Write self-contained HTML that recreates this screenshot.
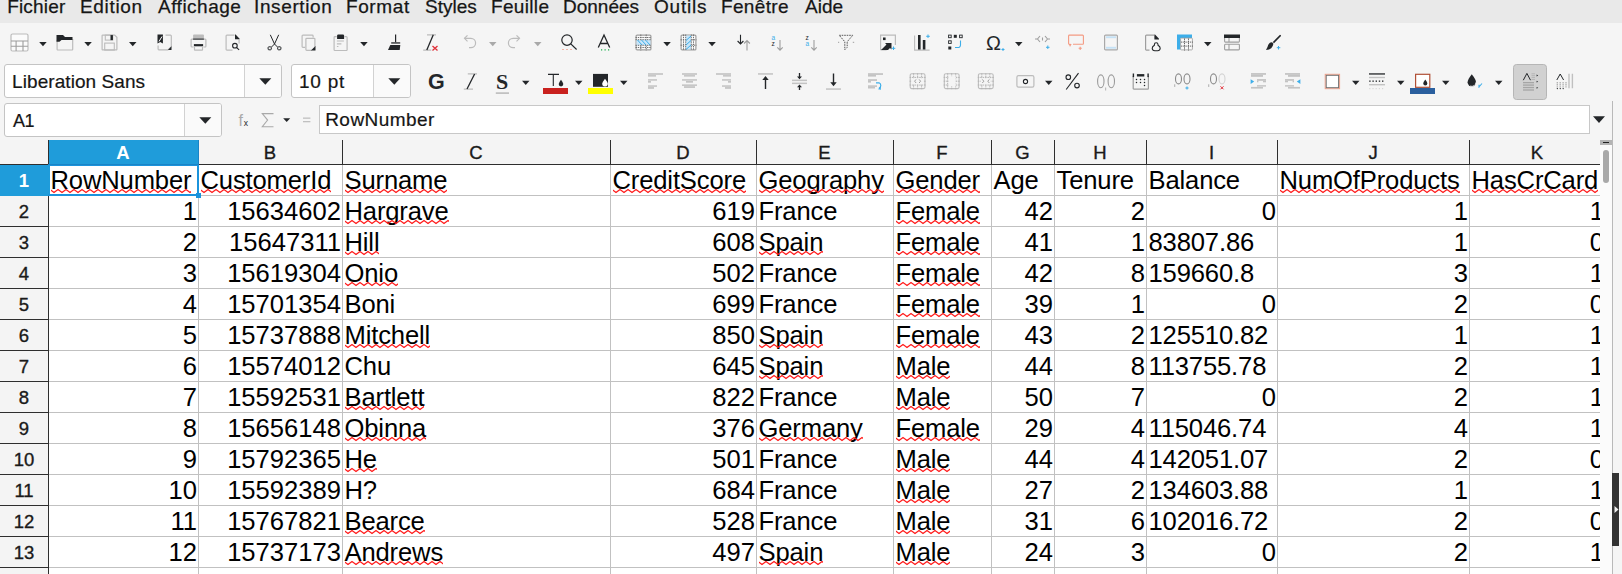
<!DOCTYPE html>
<html><head><meta charset="utf-8"><style>
html,body{margin:0;padding:0;width:1622px;height:574px;overflow:hidden;font-family:"Liberation Sans", sans-serif;}
body{position:relative;background:#f5f5f5}
.w{position:relative;display:inline-block;line-height:30px}
.sq{position:absolute;left:0;top:22.5px;display:block}
</style></head><body>
<svg width="0" height="0" style="position:absolute"><defs><pattern id="zz" x="0" y="0" width="8" height="6" patternUnits="userSpaceOnUse"><path d="M-5 4.5L-1 1.5 3 4.5 7 1.5 11 4.5" fill="none" stroke="#ff1a1a" stroke-width="1.3"/></pattern></defs></svg>
<div style="position:absolute;left:0px;top:0px;width:1622px;height:23px;background:#e9e9e9"></div><div style="position:absolute;left:7.199999999999999px;top:-3px;font-size:19px;line-height:20px;letter-spacing:0.17px;white-space:nowrap;color:#161616;-webkit-text-stroke:.25px #161616">Fichier</div><div style="position:absolute;left:80px;top:-3px;font-size:19px;line-height:20px;letter-spacing:0.67px;white-space:nowrap;color:#161616;-webkit-text-stroke:.25px #161616">Edition</div><div style="position:absolute;left:158px;top:-3px;font-size:19px;line-height:20px;letter-spacing:0.5px;white-space:nowrap;color:#161616;-webkit-text-stroke:.25px #161616">Affichage</div><div style="position:absolute;left:254px;top:-3px;font-size:19px;line-height:20px;letter-spacing:0.62px;white-space:nowrap;color:#161616;-webkit-text-stroke:.25px #161616">Insertion</div><div style="position:absolute;left:346px;top:-3px;font-size:19px;line-height:20px;letter-spacing:0.6px;white-space:nowrap;color:#161616;-webkit-text-stroke:.25px #161616">Format</div><div style="position:absolute;left:425px;top:-3px;font-size:19px;line-height:20px;letter-spacing:0px;white-space:nowrap;color:#161616;-webkit-text-stroke:.25px #161616">Styles</div><div style="position:absolute;left:491px;top:-3px;font-size:19px;line-height:20px;letter-spacing:0.33px;white-space:nowrap;color:#161616;-webkit-text-stroke:.25px #161616">Feuille</div><div style="position:absolute;left:563px;top:-3px;font-size:19px;line-height:20px;letter-spacing:0px;white-space:nowrap;color:#161616;-webkit-text-stroke:.25px #161616">Données</div><div style="position:absolute;left:654px;top:-3px;font-size:19px;line-height:20px;letter-spacing:0.8px;white-space:nowrap;color:#161616;-webkit-text-stroke:.25px #161616">Outils</div><div style="position:absolute;left:721px;top:-3px;font-size:19px;line-height:20px;letter-spacing:0.33px;white-space:nowrap;color:#161616;-webkit-text-stroke:.25px #161616">Fenêtre</div><div style="position:absolute;left:805px;top:-3px;font-size:19px;line-height:20px;letter-spacing:0px;white-space:nowrap;color:#161616;-webkit-text-stroke:.25px #161616">Aide</div><div style="position:absolute;left:4px;top:64px;width:278px;height:34px;box-sizing:border-box;border:1px solid #c4c4c4;border-radius:3px;background:#fff"></div><div style="position:absolute;left:245px;top:65px;width:36px;height:32px;background:#fafafa;border-radius:0 2px 2px 0"></div><div style="position:absolute;left:244px;top:65px;width:1px;height:32px;background:#d2d2d2"></div><div style="position:absolute;left:12.1px;top:72px;font-size:19px;line-height:20px;letter-spacing:0.07px;white-space:nowrap;color:#161616;-webkit-text-stroke:.2px #161616">Liberation Sans</div><div style="position:absolute;left:291px;top:64px;width:120px;height:34px;box-sizing:border-box;border:1px solid #c4c4c4;border-radius:3px;background:#fff"></div><div style="position:absolute;left:374px;top:65px;width:36px;height:32px;background:#fafafa;border-radius:0 2px 2px 0"></div><div style="position:absolute;left:373px;top:65px;width:1px;height:32px;background:#d2d2d2"></div><div style="position:absolute;left:299px;top:72px;font-size:19px;line-height:20px;letter-spacing:0.75px;white-space:nowrap;color:#161616;-webkit-text-stroke:.2px #161616">10 pt</div><div style="position:absolute;left:4px;top:103px;width:218px;height:34px;box-sizing:border-box;border:1px solid #c4c4c4;border-radius:3px;background:#fff"></div><div style="position:absolute;left:185px;top:104px;width:36px;height:32px;background:#fafafa;border-radius:0 2px 2px 0"></div><div style="position:absolute;left:184px;top:104px;width:1px;height:32px;background:#d2d2d2"></div><div style="position:absolute;left:12.9px;top:111px;font-size:18px;line-height:20px;letter-spacing:-0.5px;white-space:nowrap;color:#161616;-webkit-text-stroke:.2px #161616">A1</div><div style="position:absolute;left:319px;top:105px;width:1271px;height:29px;box-sizing:border-box;border:1px solid #c8c8c8;background:#fff"></div><div style="position:absolute;left:325.2px;top:110px;font-size:19px;line-height:20px;letter-spacing:.45px;white-space:nowrap;color:#161616;-webkit-text-stroke:.2px #161616">RowNumber</div><div style="position:absolute;left:0px;top:140px;width:1600px;height:24px;background:#f4f4f4"></div><div style="position:absolute;left:49px;top:165px;width:1551px;height:409px;background:#ffffff"></div><div style="position:absolute;left:0px;top:165px;width:48px;height:409px;background:#f4f4f4"></div><div style="position:absolute;left:49px;top:140px;width:149px;height:24px;background:#1f9cda"></div><div style="position:absolute;left:0px;top:165px;width:48px;height:31px;background:#1f9cda"></div><div style="position:absolute;left:48px;top:140px;width:1px;height:25px;background:#2e2e2e"></div><div style="position:absolute;left:198px;top:140px;width:1px;height:25px;background:#2e2e2e"></div><div style="position:absolute;left:342px;top:140px;width:1px;height:25px;background:#2e2e2e"></div><div style="position:absolute;left:610px;top:140px;width:1px;height:25px;background:#2e2e2e"></div><div style="position:absolute;left:756px;top:140px;width:1px;height:25px;background:#2e2e2e"></div><div style="position:absolute;left:893px;top:140px;width:1px;height:25px;background:#2e2e2e"></div><div style="position:absolute;left:991px;top:140px;width:1px;height:25px;background:#2e2e2e"></div><div style="position:absolute;left:1054px;top:140px;width:1px;height:25px;background:#2e2e2e"></div><div style="position:absolute;left:1146px;top:140px;width:1px;height:25px;background:#2e2e2e"></div><div style="position:absolute;left:1277px;top:140px;width:1px;height:25px;background:#2e2e2e"></div><div style="position:absolute;left:1469px;top:140px;width:1px;height:25px;background:#2e2e2e"></div><div style="position:absolute;left:0px;top:164px;width:1600px;height:1px;background:#2e2e2e"></div><div style="position:absolute;left:198px;top:165px;width:1px;height:409px;background:#c1c1c1"></div><div style="position:absolute;left:342px;top:165px;width:1px;height:409px;background:#c1c1c1"></div><div style="position:absolute;left:610px;top:165px;width:1px;height:409px;background:#c1c1c1"></div><div style="position:absolute;left:756px;top:165px;width:1px;height:409px;background:#c1c1c1"></div><div style="position:absolute;left:893px;top:165px;width:1px;height:409px;background:#c1c1c1"></div><div style="position:absolute;left:991px;top:165px;width:1px;height:409px;background:#c1c1c1"></div><div style="position:absolute;left:1054px;top:165px;width:1px;height:409px;background:#c1c1c1"></div><div style="position:absolute;left:1146px;top:165px;width:1px;height:409px;background:#c1c1c1"></div><div style="position:absolute;left:1277px;top:165px;width:1px;height:409px;background:#c1c1c1"></div><div style="position:absolute;left:1469px;top:165px;width:1px;height:409px;background:#c1c1c1"></div><div style="position:absolute;left:49px;top:195px;width:1551px;height:1px;background:#c1c1c1"></div><div style="position:absolute;left:49px;top:226px;width:1551px;height:1px;background:#c1c1c1"></div><div style="position:absolute;left:0px;top:226px;width:48px;height:1px;background:#2e2e2e"></div><div style="position:absolute;left:49px;top:257px;width:1551px;height:1px;background:#c1c1c1"></div><div style="position:absolute;left:0px;top:257px;width:48px;height:1px;background:#2e2e2e"></div><div style="position:absolute;left:49px;top:288px;width:1551px;height:1px;background:#c1c1c1"></div><div style="position:absolute;left:0px;top:288px;width:48px;height:1px;background:#2e2e2e"></div><div style="position:absolute;left:49px;top:319px;width:1551px;height:1px;background:#c1c1c1"></div><div style="position:absolute;left:0px;top:319px;width:48px;height:1px;background:#2e2e2e"></div><div style="position:absolute;left:49px;top:350px;width:1551px;height:1px;background:#c1c1c1"></div><div style="position:absolute;left:0px;top:350px;width:48px;height:1px;background:#2e2e2e"></div><div style="position:absolute;left:49px;top:381px;width:1551px;height:1px;background:#c1c1c1"></div><div style="position:absolute;left:0px;top:381px;width:48px;height:1px;background:#2e2e2e"></div><div style="position:absolute;left:49px;top:412px;width:1551px;height:1px;background:#c1c1c1"></div><div style="position:absolute;left:0px;top:412px;width:48px;height:1px;background:#2e2e2e"></div><div style="position:absolute;left:49px;top:443px;width:1551px;height:1px;background:#c1c1c1"></div><div style="position:absolute;left:0px;top:443px;width:48px;height:1px;background:#2e2e2e"></div><div style="position:absolute;left:49px;top:474px;width:1551px;height:1px;background:#c1c1c1"></div><div style="position:absolute;left:0px;top:474px;width:48px;height:1px;background:#2e2e2e"></div><div style="position:absolute;left:49px;top:505px;width:1551px;height:1px;background:#c1c1c1"></div><div style="position:absolute;left:0px;top:505px;width:48px;height:1px;background:#2e2e2e"></div><div style="position:absolute;left:49px;top:536px;width:1551px;height:1px;background:#c1c1c1"></div><div style="position:absolute;left:0px;top:536px;width:48px;height:1px;background:#2e2e2e"></div><div style="position:absolute;left:49px;top:567px;width:1551px;height:1px;background:#c1c1c1"></div><div style="position:absolute;left:0px;top:567px;width:48px;height:1px;background:#2e2e2e"></div><div style="position:absolute;left:48px;top:165px;width:1px;height:409px;background:#2e2e2e"></div><div style="position:absolute;left:48px;top:143px;width:150px;text-align:center;font-size:18.5px;line-height:20px;color:#ffffff;font-weight:bold;-webkit-text-stroke:0 #ffffff">A</div><div style="position:absolute;left:198px;top:143px;width:144px;text-align:center;font-size:18.5px;line-height:20px;color:#1a1a1a;font-weight:normal;-webkit-text-stroke:0.35px #1a1a1a">B</div><div style="position:absolute;left:342px;top:143px;width:268px;text-align:center;font-size:18.5px;line-height:20px;color:#1a1a1a;font-weight:normal;-webkit-text-stroke:0.35px #1a1a1a">C</div><div style="position:absolute;left:610px;top:143px;width:146px;text-align:center;font-size:18.5px;line-height:20px;color:#1a1a1a;font-weight:normal;-webkit-text-stroke:0.35px #1a1a1a">D</div><div style="position:absolute;left:756px;top:143px;width:137px;text-align:center;font-size:18.5px;line-height:20px;color:#1a1a1a;font-weight:normal;-webkit-text-stroke:0.35px #1a1a1a">E</div><div style="position:absolute;left:893px;top:143px;width:98px;text-align:center;font-size:18.5px;line-height:20px;color:#1a1a1a;font-weight:normal;-webkit-text-stroke:0.35px #1a1a1a">F</div><div style="position:absolute;left:991px;top:143px;width:63px;text-align:center;font-size:18.5px;line-height:20px;color:#1a1a1a;font-weight:normal;-webkit-text-stroke:0.35px #1a1a1a">G</div><div style="position:absolute;left:1054px;top:143px;width:92px;text-align:center;font-size:18.5px;line-height:20px;color:#1a1a1a;font-weight:normal;-webkit-text-stroke:0.35px #1a1a1a">H</div><div style="position:absolute;left:1146px;top:143px;width:131px;text-align:center;font-size:18.5px;line-height:20px;color:#1a1a1a;font-weight:normal;-webkit-text-stroke:0.35px #1a1a1a">I</div><div style="position:absolute;left:1277px;top:143px;width:192px;text-align:center;font-size:18.5px;line-height:20px;color:#1a1a1a;font-weight:normal;-webkit-text-stroke:0.35px #1a1a1a">J</div><div style="position:absolute;left:1469px;top:143px;width:136px;text-align:center;font-size:18.5px;line-height:20px;color:#1a1a1a;font-weight:normal;-webkit-text-stroke:0.35px #1a1a1a">K</div><div style="position:absolute;left:0px;top:171px;width:48px;text-align:center;font-size:18.5px;line-height:20px;color:#ffffff;font-weight:bold;-webkit-text-stroke:0 #ffffff">1</div><div style="position:absolute;left:0px;top:202px;width:48px;text-align:center;font-size:18.5px;line-height:20px;color:#1a1a1a;font-weight:normal;-webkit-text-stroke:0.35px #1a1a1a">2</div><div style="position:absolute;left:0px;top:233px;width:48px;text-align:center;font-size:18.5px;line-height:20px;color:#1a1a1a;font-weight:normal;-webkit-text-stroke:0.35px #1a1a1a">3</div><div style="position:absolute;left:0px;top:264px;width:48px;text-align:center;font-size:18.5px;line-height:20px;color:#1a1a1a;font-weight:normal;-webkit-text-stroke:0.35px #1a1a1a">4</div><div style="position:absolute;left:0px;top:295px;width:48px;text-align:center;font-size:18.5px;line-height:20px;color:#1a1a1a;font-weight:normal;-webkit-text-stroke:0.35px #1a1a1a">5</div><div style="position:absolute;left:0px;top:326px;width:48px;text-align:center;font-size:18.5px;line-height:20px;color:#1a1a1a;font-weight:normal;-webkit-text-stroke:0.35px #1a1a1a">6</div><div style="position:absolute;left:0px;top:357px;width:48px;text-align:center;font-size:18.5px;line-height:20px;color:#1a1a1a;font-weight:normal;-webkit-text-stroke:0.35px #1a1a1a">7</div><div style="position:absolute;left:0px;top:388px;width:48px;text-align:center;font-size:18.5px;line-height:20px;color:#1a1a1a;font-weight:normal;-webkit-text-stroke:0.35px #1a1a1a">8</div><div style="position:absolute;left:0px;top:419px;width:48px;text-align:center;font-size:18.5px;line-height:20px;color:#1a1a1a;font-weight:normal;-webkit-text-stroke:0.35px #1a1a1a">9</div><div style="position:absolute;left:0px;top:450px;width:48px;text-align:center;font-size:18.5px;line-height:20px;color:#1a1a1a;font-weight:normal;-webkit-text-stroke:0.35px #1a1a1a">10</div><div style="position:absolute;left:0px;top:481px;width:48px;text-align:center;font-size:18.5px;line-height:20px;color:#1a1a1a;font-weight:normal;-webkit-text-stroke:0.35px #1a1a1a">11</div><div style="position:absolute;left:0px;top:512px;width:48px;text-align:center;font-size:18.5px;line-height:20px;color:#1a1a1a;font-weight:normal;-webkit-text-stroke:0.35px #1a1a1a">12</div><div style="position:absolute;left:0px;top:543px;width:48px;text-align:center;font-size:18.5px;line-height:20px;color:#1a1a1a;font-weight:normal;-webkit-text-stroke:0.35px #1a1a1a">13</div><div style="position:absolute;left:0;top:0;width:1600px;height:574px;overflow:hidden"><div style="position:absolute;left:50.5px;top:165px;font-size:25.6px;line-height:30px;letter-spacing:-0.15px;color:#000;white-space:nowrap"><span class="w">RowNumber<svg class="sq" width="100%" height="6"><rect width="100%" height="6" fill="url(#zz)"/></svg></span></div><div style="position:absolute;left:200.5px;top:165px;font-size:25.6px;line-height:30px;letter-spacing:-0.15px;color:#000;white-space:nowrap"><span class="w">CustomerId<svg class="sq" width="100%" height="6"><rect width="100%" height="6" fill="url(#zz)"/></svg></span></div><div style="position:absolute;left:344.5px;top:165px;font-size:25.6px;line-height:30px;letter-spacing:-0.15px;color:#000;white-space:nowrap"><span class="w">Surname<svg class="sq" width="100%" height="6"><rect width="100%" height="6" fill="url(#zz)"/></svg></span></div><div style="position:absolute;left:612.5px;top:165px;font-size:25.6px;line-height:30px;letter-spacing:-0.15px;color:#000;white-space:nowrap"><span class="w">CreditScore<svg class="sq" width="100%" height="6"><rect width="100%" height="6" fill="url(#zz)"/></svg></span></div><div style="position:absolute;left:758.5px;top:165px;font-size:25.6px;line-height:30px;letter-spacing:-0.15px;color:#000;white-space:nowrap"><span class="w">Geography<svg class="sq" width="100%" height="6"><rect width="100%" height="6" fill="url(#zz)"/></svg></span></div><div style="position:absolute;left:895.5px;top:165px;font-size:25.6px;line-height:30px;letter-spacing:-0.15px;color:#000;white-space:nowrap"><span class="w">Gender<svg class="sq" width="100%" height="6"><rect width="100%" height="6" fill="url(#zz)"/></svg></span></div><div style="position:absolute;left:993.5px;top:165px;font-size:25.6px;line-height:30px;letter-spacing:-0.15px;color:#000;white-space:nowrap"><span class="w">Age</span></div><div style="position:absolute;left:1056.5px;top:165px;font-size:25.6px;line-height:30px;letter-spacing:-0.15px;color:#000;white-space:nowrap"><span class="w">Tenure</span></div><div style="position:absolute;left:1148.5px;top:165px;font-size:25.6px;line-height:30px;letter-spacing:-0.15px;color:#000;white-space:nowrap"><span class="w">Balance</span></div><div style="position:absolute;left:1279.5px;top:165px;font-size:25.6px;line-height:30px;letter-spacing:-0.15px;color:#000;white-space:nowrap"><span class="w">NumOfProducts<svg class="sq" width="100%" height="6"><rect width="100%" height="6" fill="url(#zz)"/></svg></span></div><div style="position:absolute;left:1471.5px;top:165px;font-size:25.6px;line-height:30px;letter-spacing:-0.15px;color:#000;white-space:nowrap"><span class="w">HasCrCard<svg class="sq" width="100%" height="6"><rect width="100%" height="6" fill="url(#zz)"/></svg></span></div><div style="position:absolute;left:49px;top:196px;width:148px;height:30px;text-align:right;font-size:25.6px;line-height:30px;color:#000;white-space:nowrap">1</div><div style="position:absolute;left:199px;top:196px;width:142px;height:30px;text-align:right;font-size:25.6px;line-height:30px;color:#000;white-space:nowrap">15634602</div><div style="position:absolute;left:344.5px;top:196px;font-size:25.6px;line-height:30px;letter-spacing:-0.15px;color:#000;white-space:nowrap"><span class="w">Hargrave<svg class="sq" width="100%" height="6"><rect width="100%" height="6" fill="url(#zz)"/></svg></span></div><div style="position:absolute;left:611px;top:196px;width:144px;height:30px;text-align:right;font-size:25.6px;line-height:30px;color:#000;white-space:nowrap">619</div><div style="position:absolute;left:758.5px;top:196px;font-size:25.6px;line-height:30px;letter-spacing:-0.15px;color:#000;white-space:nowrap"><span class="w">France</span></div><div style="position:absolute;left:895.5px;top:196px;font-size:25.6px;line-height:30px;letter-spacing:-0.15px;color:#000;white-space:nowrap"><span class="w">Female<svg class="sq" width="100%" height="6"><rect width="100%" height="6" fill="url(#zz)"/></svg></span></div><div style="position:absolute;left:992px;top:196px;width:61px;height:30px;text-align:right;font-size:25.6px;line-height:30px;color:#000;white-space:nowrap">42</div><div style="position:absolute;left:1055px;top:196px;width:90px;height:30px;text-align:right;font-size:25.6px;line-height:30px;color:#000;white-space:nowrap">2</div><div style="position:absolute;left:1147px;top:196px;width:129px;height:30px;text-align:right;font-size:25.6px;line-height:30px;color:#000;white-space:nowrap">0</div><div style="position:absolute;left:1278px;top:196px;width:190px;height:30px;text-align:right;font-size:25.6px;line-height:30px;color:#000;white-space:nowrap">1</div><div style="position:absolute;left:1470px;top:196px;width:134px;height:30px;text-align:right;font-size:25.6px;line-height:30px;color:#000;white-space:nowrap">1</div><div style="position:absolute;left:49px;top:227px;width:148px;height:30px;text-align:right;font-size:25.6px;line-height:30px;color:#000;white-space:nowrap">2</div><div style="position:absolute;left:199px;top:227px;width:142px;height:30px;text-align:right;font-size:25.6px;line-height:30px;color:#000;white-space:nowrap">15647311</div><div style="position:absolute;left:344.5px;top:227px;font-size:25.6px;line-height:30px;letter-spacing:-0.15px;color:#000;white-space:nowrap"><span class="w">Hill<svg class="sq" width="100%" height="6"><rect width="100%" height="6" fill="url(#zz)"/></svg></span></div><div style="position:absolute;left:611px;top:227px;width:144px;height:30px;text-align:right;font-size:25.6px;line-height:30px;color:#000;white-space:nowrap">608</div><div style="position:absolute;left:758.5px;top:227px;font-size:25.6px;line-height:30px;letter-spacing:-0.15px;color:#000;white-space:nowrap"><span class="w">Spain<svg class="sq" width="100%" height="6"><rect width="100%" height="6" fill="url(#zz)"/></svg></span></div><div style="position:absolute;left:895.5px;top:227px;font-size:25.6px;line-height:30px;letter-spacing:-0.15px;color:#000;white-space:nowrap"><span class="w">Female<svg class="sq" width="100%" height="6"><rect width="100%" height="6" fill="url(#zz)"/></svg></span></div><div style="position:absolute;left:992px;top:227px;width:61px;height:30px;text-align:right;font-size:25.6px;line-height:30px;color:#000;white-space:nowrap">41</div><div style="position:absolute;left:1055px;top:227px;width:90px;height:30px;text-align:right;font-size:25.6px;line-height:30px;color:#000;white-space:nowrap">1</div><div style="position:absolute;left:1148.5px;top:227px;font-size:25.6px;line-height:30px;letter-spacing:-0.15px;color:#000;white-space:nowrap"><span class="w">83807.86</span></div><div style="position:absolute;left:1278px;top:227px;width:190px;height:30px;text-align:right;font-size:25.6px;line-height:30px;color:#000;white-space:nowrap">1</div><div style="position:absolute;left:1470px;top:227px;width:134px;height:30px;text-align:right;font-size:25.6px;line-height:30px;color:#000;white-space:nowrap">0</div><div style="position:absolute;left:49px;top:258px;width:148px;height:30px;text-align:right;font-size:25.6px;line-height:30px;color:#000;white-space:nowrap">3</div><div style="position:absolute;left:199px;top:258px;width:142px;height:30px;text-align:right;font-size:25.6px;line-height:30px;color:#000;white-space:nowrap">15619304</div><div style="position:absolute;left:344.5px;top:258px;font-size:25.6px;line-height:30px;letter-spacing:-0.15px;color:#000;white-space:nowrap"><span class="w">Onio<svg class="sq" width="100%" height="6"><rect width="100%" height="6" fill="url(#zz)"/></svg></span></div><div style="position:absolute;left:611px;top:258px;width:144px;height:30px;text-align:right;font-size:25.6px;line-height:30px;color:#000;white-space:nowrap">502</div><div style="position:absolute;left:758.5px;top:258px;font-size:25.6px;line-height:30px;letter-spacing:-0.15px;color:#000;white-space:nowrap"><span class="w">France</span></div><div style="position:absolute;left:895.5px;top:258px;font-size:25.6px;line-height:30px;letter-spacing:-0.15px;color:#000;white-space:nowrap"><span class="w">Female<svg class="sq" width="100%" height="6"><rect width="100%" height="6" fill="url(#zz)"/></svg></span></div><div style="position:absolute;left:992px;top:258px;width:61px;height:30px;text-align:right;font-size:25.6px;line-height:30px;color:#000;white-space:nowrap">42</div><div style="position:absolute;left:1055px;top:258px;width:90px;height:30px;text-align:right;font-size:25.6px;line-height:30px;color:#000;white-space:nowrap">8</div><div style="position:absolute;left:1148.5px;top:258px;font-size:25.6px;line-height:30px;letter-spacing:-0.15px;color:#000;white-space:nowrap"><span class="w">159660.8</span></div><div style="position:absolute;left:1278px;top:258px;width:190px;height:30px;text-align:right;font-size:25.6px;line-height:30px;color:#000;white-space:nowrap">3</div><div style="position:absolute;left:1470px;top:258px;width:134px;height:30px;text-align:right;font-size:25.6px;line-height:30px;color:#000;white-space:nowrap">1</div><div style="position:absolute;left:49px;top:289px;width:148px;height:30px;text-align:right;font-size:25.6px;line-height:30px;color:#000;white-space:nowrap">4</div><div style="position:absolute;left:199px;top:289px;width:142px;height:30px;text-align:right;font-size:25.6px;line-height:30px;color:#000;white-space:nowrap">15701354</div><div style="position:absolute;left:344.5px;top:289px;font-size:25.6px;line-height:30px;letter-spacing:-0.15px;color:#000;white-space:nowrap"><span class="w">Boni</span></div><div style="position:absolute;left:611px;top:289px;width:144px;height:30px;text-align:right;font-size:25.6px;line-height:30px;color:#000;white-space:nowrap">699</div><div style="position:absolute;left:758.5px;top:289px;font-size:25.6px;line-height:30px;letter-spacing:-0.15px;color:#000;white-space:nowrap"><span class="w">France</span></div><div style="position:absolute;left:895.5px;top:289px;font-size:25.6px;line-height:30px;letter-spacing:-0.15px;color:#000;white-space:nowrap"><span class="w">Female<svg class="sq" width="100%" height="6"><rect width="100%" height="6" fill="url(#zz)"/></svg></span></div><div style="position:absolute;left:992px;top:289px;width:61px;height:30px;text-align:right;font-size:25.6px;line-height:30px;color:#000;white-space:nowrap">39</div><div style="position:absolute;left:1055px;top:289px;width:90px;height:30px;text-align:right;font-size:25.6px;line-height:30px;color:#000;white-space:nowrap">1</div><div style="position:absolute;left:1147px;top:289px;width:129px;height:30px;text-align:right;font-size:25.6px;line-height:30px;color:#000;white-space:nowrap">0</div><div style="position:absolute;left:1278px;top:289px;width:190px;height:30px;text-align:right;font-size:25.6px;line-height:30px;color:#000;white-space:nowrap">2</div><div style="position:absolute;left:1470px;top:289px;width:134px;height:30px;text-align:right;font-size:25.6px;line-height:30px;color:#000;white-space:nowrap">0</div><div style="position:absolute;left:49px;top:320px;width:148px;height:30px;text-align:right;font-size:25.6px;line-height:30px;color:#000;white-space:nowrap">5</div><div style="position:absolute;left:199px;top:320px;width:142px;height:30px;text-align:right;font-size:25.6px;line-height:30px;color:#000;white-space:nowrap">15737888</div><div style="position:absolute;left:344.5px;top:320px;font-size:25.6px;line-height:30px;letter-spacing:-0.15px;color:#000;white-space:nowrap"><span class="w">Mitchell<svg class="sq" width="100%" height="6"><rect width="100%" height="6" fill="url(#zz)"/></svg></span></div><div style="position:absolute;left:611px;top:320px;width:144px;height:30px;text-align:right;font-size:25.6px;line-height:30px;color:#000;white-space:nowrap">850</div><div style="position:absolute;left:758.5px;top:320px;font-size:25.6px;line-height:30px;letter-spacing:-0.15px;color:#000;white-space:nowrap"><span class="w">Spain<svg class="sq" width="100%" height="6"><rect width="100%" height="6" fill="url(#zz)"/></svg></span></div><div style="position:absolute;left:895.5px;top:320px;font-size:25.6px;line-height:30px;letter-spacing:-0.15px;color:#000;white-space:nowrap"><span class="w">Female<svg class="sq" width="100%" height="6"><rect width="100%" height="6" fill="url(#zz)"/></svg></span></div><div style="position:absolute;left:992px;top:320px;width:61px;height:30px;text-align:right;font-size:25.6px;line-height:30px;color:#000;white-space:nowrap">43</div><div style="position:absolute;left:1055px;top:320px;width:90px;height:30px;text-align:right;font-size:25.6px;line-height:30px;color:#000;white-space:nowrap">2</div><div style="position:absolute;left:1148.5px;top:320px;font-size:25.6px;line-height:30px;letter-spacing:-0.15px;color:#000;white-space:nowrap"><span class="w">125510.82</span></div><div style="position:absolute;left:1278px;top:320px;width:190px;height:30px;text-align:right;font-size:25.6px;line-height:30px;color:#000;white-space:nowrap">1</div><div style="position:absolute;left:1470px;top:320px;width:134px;height:30px;text-align:right;font-size:25.6px;line-height:30px;color:#000;white-space:nowrap">1</div><div style="position:absolute;left:49px;top:351px;width:148px;height:30px;text-align:right;font-size:25.6px;line-height:30px;color:#000;white-space:nowrap">6</div><div style="position:absolute;left:199px;top:351px;width:142px;height:30px;text-align:right;font-size:25.6px;line-height:30px;color:#000;white-space:nowrap">15574012</div><div style="position:absolute;left:344.5px;top:351px;font-size:25.6px;line-height:30px;letter-spacing:-0.15px;color:#000;white-space:nowrap"><span class="w">Chu</span></div><div style="position:absolute;left:611px;top:351px;width:144px;height:30px;text-align:right;font-size:25.6px;line-height:30px;color:#000;white-space:nowrap">645</div><div style="position:absolute;left:758.5px;top:351px;font-size:25.6px;line-height:30px;letter-spacing:-0.15px;color:#000;white-space:nowrap"><span class="w">Spain<svg class="sq" width="100%" height="6"><rect width="100%" height="6" fill="url(#zz)"/></svg></span></div><div style="position:absolute;left:895.5px;top:351px;font-size:25.6px;line-height:30px;letter-spacing:-0.15px;color:#000;white-space:nowrap"><span class="w">Male<svg class="sq" width="100%" height="6"><rect width="100%" height="6" fill="url(#zz)"/></svg></span></div><div style="position:absolute;left:992px;top:351px;width:61px;height:30px;text-align:right;font-size:25.6px;line-height:30px;color:#000;white-space:nowrap">44</div><div style="position:absolute;left:1055px;top:351px;width:90px;height:30px;text-align:right;font-size:25.6px;line-height:30px;color:#000;white-space:nowrap">8</div><div style="position:absolute;left:1148.5px;top:351px;font-size:25.6px;line-height:30px;letter-spacing:-0.15px;color:#000;white-space:nowrap"><span class="w">113755.78</span></div><div style="position:absolute;left:1278px;top:351px;width:190px;height:30px;text-align:right;font-size:25.6px;line-height:30px;color:#000;white-space:nowrap">2</div><div style="position:absolute;left:1470px;top:351px;width:134px;height:30px;text-align:right;font-size:25.6px;line-height:30px;color:#000;white-space:nowrap">1</div><div style="position:absolute;left:49px;top:382px;width:148px;height:30px;text-align:right;font-size:25.6px;line-height:30px;color:#000;white-space:nowrap">7</div><div style="position:absolute;left:199px;top:382px;width:142px;height:30px;text-align:right;font-size:25.6px;line-height:30px;color:#000;white-space:nowrap">15592531</div><div style="position:absolute;left:344.5px;top:382px;font-size:25.6px;line-height:30px;letter-spacing:-0.15px;color:#000;white-space:nowrap"><span class="w">Bartlett<svg class="sq" width="100%" height="6"><rect width="100%" height="6" fill="url(#zz)"/></svg></span></div><div style="position:absolute;left:611px;top:382px;width:144px;height:30px;text-align:right;font-size:25.6px;line-height:30px;color:#000;white-space:nowrap">822</div><div style="position:absolute;left:758.5px;top:382px;font-size:25.6px;line-height:30px;letter-spacing:-0.15px;color:#000;white-space:nowrap"><span class="w">France</span></div><div style="position:absolute;left:895.5px;top:382px;font-size:25.6px;line-height:30px;letter-spacing:-0.15px;color:#000;white-space:nowrap"><span class="w">Male<svg class="sq" width="100%" height="6"><rect width="100%" height="6" fill="url(#zz)"/></svg></span></div><div style="position:absolute;left:992px;top:382px;width:61px;height:30px;text-align:right;font-size:25.6px;line-height:30px;color:#000;white-space:nowrap">50</div><div style="position:absolute;left:1055px;top:382px;width:90px;height:30px;text-align:right;font-size:25.6px;line-height:30px;color:#000;white-space:nowrap">7</div><div style="position:absolute;left:1147px;top:382px;width:129px;height:30px;text-align:right;font-size:25.6px;line-height:30px;color:#000;white-space:nowrap">0</div><div style="position:absolute;left:1278px;top:382px;width:190px;height:30px;text-align:right;font-size:25.6px;line-height:30px;color:#000;white-space:nowrap">2</div><div style="position:absolute;left:1470px;top:382px;width:134px;height:30px;text-align:right;font-size:25.6px;line-height:30px;color:#000;white-space:nowrap">1</div><div style="position:absolute;left:49px;top:413px;width:148px;height:30px;text-align:right;font-size:25.6px;line-height:30px;color:#000;white-space:nowrap">8</div><div style="position:absolute;left:199px;top:413px;width:142px;height:30px;text-align:right;font-size:25.6px;line-height:30px;color:#000;white-space:nowrap">15656148</div><div style="position:absolute;left:344.5px;top:413px;font-size:25.6px;line-height:30px;letter-spacing:-0.15px;color:#000;white-space:nowrap"><span class="w">Obinna<svg class="sq" width="100%" height="6"><rect width="100%" height="6" fill="url(#zz)"/></svg></span></div><div style="position:absolute;left:611px;top:413px;width:144px;height:30px;text-align:right;font-size:25.6px;line-height:30px;color:#000;white-space:nowrap">376</div><div style="position:absolute;left:758.5px;top:413px;font-size:25.6px;line-height:30px;letter-spacing:-0.15px;color:#000;white-space:nowrap"><span class="w">Germany<svg class="sq" width="100%" height="6"><rect width="100%" height="6" fill="url(#zz)"/></svg></span></div><div style="position:absolute;left:895.5px;top:413px;font-size:25.6px;line-height:30px;letter-spacing:-0.15px;color:#000;white-space:nowrap"><span class="w">Female<svg class="sq" width="100%" height="6"><rect width="100%" height="6" fill="url(#zz)"/></svg></span></div><div style="position:absolute;left:992px;top:413px;width:61px;height:30px;text-align:right;font-size:25.6px;line-height:30px;color:#000;white-space:nowrap">29</div><div style="position:absolute;left:1055px;top:413px;width:90px;height:30px;text-align:right;font-size:25.6px;line-height:30px;color:#000;white-space:nowrap">4</div><div style="position:absolute;left:1148.5px;top:413px;font-size:25.6px;line-height:30px;letter-spacing:-0.15px;color:#000;white-space:nowrap"><span class="w">115046.74</span></div><div style="position:absolute;left:1278px;top:413px;width:190px;height:30px;text-align:right;font-size:25.6px;line-height:30px;color:#000;white-space:nowrap">4</div><div style="position:absolute;left:1470px;top:413px;width:134px;height:30px;text-align:right;font-size:25.6px;line-height:30px;color:#000;white-space:nowrap">1</div><div style="position:absolute;left:49px;top:444px;width:148px;height:30px;text-align:right;font-size:25.6px;line-height:30px;color:#000;white-space:nowrap">9</div><div style="position:absolute;left:199px;top:444px;width:142px;height:30px;text-align:right;font-size:25.6px;line-height:30px;color:#000;white-space:nowrap">15792365</div><div style="position:absolute;left:344.5px;top:444px;font-size:25.6px;line-height:30px;letter-spacing:-0.15px;color:#000;white-space:nowrap"><span class="w">He<svg class="sq" width="100%" height="6"><rect width="100%" height="6" fill="url(#zz)"/></svg></span></div><div style="position:absolute;left:611px;top:444px;width:144px;height:30px;text-align:right;font-size:25.6px;line-height:30px;color:#000;white-space:nowrap">501</div><div style="position:absolute;left:758.5px;top:444px;font-size:25.6px;line-height:30px;letter-spacing:-0.15px;color:#000;white-space:nowrap"><span class="w">France</span></div><div style="position:absolute;left:895.5px;top:444px;font-size:25.6px;line-height:30px;letter-spacing:-0.15px;color:#000;white-space:nowrap"><span class="w">Male<svg class="sq" width="100%" height="6"><rect width="100%" height="6" fill="url(#zz)"/></svg></span></div><div style="position:absolute;left:992px;top:444px;width:61px;height:30px;text-align:right;font-size:25.6px;line-height:30px;color:#000;white-space:nowrap">44</div><div style="position:absolute;left:1055px;top:444px;width:90px;height:30px;text-align:right;font-size:25.6px;line-height:30px;color:#000;white-space:nowrap">4</div><div style="position:absolute;left:1148.5px;top:444px;font-size:25.6px;line-height:30px;letter-spacing:-0.15px;color:#000;white-space:nowrap"><span class="w">142051.07</span></div><div style="position:absolute;left:1278px;top:444px;width:190px;height:30px;text-align:right;font-size:25.6px;line-height:30px;color:#000;white-space:nowrap">2</div><div style="position:absolute;left:1470px;top:444px;width:134px;height:30px;text-align:right;font-size:25.6px;line-height:30px;color:#000;white-space:nowrap">0</div><div style="position:absolute;left:49px;top:475px;width:148px;height:30px;text-align:right;font-size:25.6px;line-height:30px;color:#000;white-space:nowrap">10</div><div style="position:absolute;left:199px;top:475px;width:142px;height:30px;text-align:right;font-size:25.6px;line-height:30px;color:#000;white-space:nowrap">15592389</div><div style="position:absolute;left:344.5px;top:475px;font-size:25.6px;line-height:30px;letter-spacing:-0.15px;color:#000;white-space:nowrap"><span class="w">H?</span></div><div style="position:absolute;left:611px;top:475px;width:144px;height:30px;text-align:right;font-size:25.6px;line-height:30px;color:#000;white-space:nowrap">684</div><div style="position:absolute;left:758.5px;top:475px;font-size:25.6px;line-height:30px;letter-spacing:-0.15px;color:#000;white-space:nowrap"><span class="w">France</span></div><div style="position:absolute;left:895.5px;top:475px;font-size:25.6px;line-height:30px;letter-spacing:-0.15px;color:#000;white-space:nowrap"><span class="w">Male<svg class="sq" width="100%" height="6"><rect width="100%" height="6" fill="url(#zz)"/></svg></span></div><div style="position:absolute;left:992px;top:475px;width:61px;height:30px;text-align:right;font-size:25.6px;line-height:30px;color:#000;white-space:nowrap">27</div><div style="position:absolute;left:1055px;top:475px;width:90px;height:30px;text-align:right;font-size:25.6px;line-height:30px;color:#000;white-space:nowrap">2</div><div style="position:absolute;left:1148.5px;top:475px;font-size:25.6px;line-height:30px;letter-spacing:-0.15px;color:#000;white-space:nowrap"><span class="w">134603.88</span></div><div style="position:absolute;left:1278px;top:475px;width:190px;height:30px;text-align:right;font-size:25.6px;line-height:30px;color:#000;white-space:nowrap">1</div><div style="position:absolute;left:1470px;top:475px;width:134px;height:30px;text-align:right;font-size:25.6px;line-height:30px;color:#000;white-space:nowrap">1</div><div style="position:absolute;left:49px;top:506px;width:148px;height:30px;text-align:right;font-size:25.6px;line-height:30px;color:#000;white-space:nowrap">11</div><div style="position:absolute;left:199px;top:506px;width:142px;height:30px;text-align:right;font-size:25.6px;line-height:30px;color:#000;white-space:nowrap">15767821</div><div style="position:absolute;left:344.5px;top:506px;font-size:25.6px;line-height:30px;letter-spacing:-0.15px;color:#000;white-space:nowrap"><span class="w">Bearce<svg class="sq" width="100%" height="6"><rect width="100%" height="6" fill="url(#zz)"/></svg></span></div><div style="position:absolute;left:611px;top:506px;width:144px;height:30px;text-align:right;font-size:25.6px;line-height:30px;color:#000;white-space:nowrap">528</div><div style="position:absolute;left:758.5px;top:506px;font-size:25.6px;line-height:30px;letter-spacing:-0.15px;color:#000;white-space:nowrap"><span class="w">France</span></div><div style="position:absolute;left:895.5px;top:506px;font-size:25.6px;line-height:30px;letter-spacing:-0.15px;color:#000;white-space:nowrap"><span class="w">Male<svg class="sq" width="100%" height="6"><rect width="100%" height="6" fill="url(#zz)"/></svg></span></div><div style="position:absolute;left:992px;top:506px;width:61px;height:30px;text-align:right;font-size:25.6px;line-height:30px;color:#000;white-space:nowrap">31</div><div style="position:absolute;left:1055px;top:506px;width:90px;height:30px;text-align:right;font-size:25.6px;line-height:30px;color:#000;white-space:nowrap">6</div><div style="position:absolute;left:1148.5px;top:506px;font-size:25.6px;line-height:30px;letter-spacing:-0.15px;color:#000;white-space:nowrap"><span class="w">102016.72</span></div><div style="position:absolute;left:1278px;top:506px;width:190px;height:30px;text-align:right;font-size:25.6px;line-height:30px;color:#000;white-space:nowrap">2</div><div style="position:absolute;left:1470px;top:506px;width:134px;height:30px;text-align:right;font-size:25.6px;line-height:30px;color:#000;white-space:nowrap">0</div><div style="position:absolute;left:49px;top:537px;width:148px;height:30px;text-align:right;font-size:25.6px;line-height:30px;color:#000;white-space:nowrap">12</div><div style="position:absolute;left:199px;top:537px;width:142px;height:30px;text-align:right;font-size:25.6px;line-height:30px;color:#000;white-space:nowrap">15737173</div><div style="position:absolute;left:344.5px;top:537px;font-size:25.6px;line-height:30px;letter-spacing:-0.15px;color:#000;white-space:nowrap"><span class="w">Andrews<svg class="sq" width="100%" height="6"><rect width="100%" height="6" fill="url(#zz)"/></svg></span></div><div style="position:absolute;left:611px;top:537px;width:144px;height:30px;text-align:right;font-size:25.6px;line-height:30px;color:#000;white-space:nowrap">497</div><div style="position:absolute;left:758.5px;top:537px;font-size:25.6px;line-height:30px;letter-spacing:-0.15px;color:#000;white-space:nowrap"><span class="w">Spain<svg class="sq" width="100%" height="6"><rect width="100%" height="6" fill="url(#zz)"/></svg></span></div><div style="position:absolute;left:895.5px;top:537px;font-size:25.6px;line-height:30px;letter-spacing:-0.15px;color:#000;white-space:nowrap"><span class="w">Male<svg class="sq" width="100%" height="6"><rect width="100%" height="6" fill="url(#zz)"/></svg></span></div><div style="position:absolute;left:992px;top:537px;width:61px;height:30px;text-align:right;font-size:25.6px;line-height:30px;color:#000;white-space:nowrap">24</div><div style="position:absolute;left:1055px;top:537px;width:90px;height:30px;text-align:right;font-size:25.6px;line-height:30px;color:#000;white-space:nowrap">3</div><div style="position:absolute;left:1147px;top:537px;width:129px;height:30px;text-align:right;font-size:25.6px;line-height:30px;color:#000;white-space:nowrap">0</div><div style="position:absolute;left:1278px;top:537px;width:190px;height:30px;text-align:right;font-size:25.6px;line-height:30px;color:#000;white-space:nowrap">2</div><div style="position:absolute;left:1470px;top:537px;width:134px;height:30px;text-align:right;font-size:25.6px;line-height:30px;color:#000;white-space:nowrap">1</div></div><div style="position:absolute;left:48px;top:164px;width:151px;height:1px;background:#1a84c6"></div><div style="position:absolute;left:48px;top:165px;width:151px;height:1px;background:#1b93dc"></div><div style="position:absolute;left:48px;top:165px;width:2px;height:30px;background:#1f9cda"></div><div style="position:absolute;left:197px;top:165px;width:2px;height:30px;background:#1b93dc"></div><div style="position:absolute;left:48px;top:194px;width:151px;height:2px;background:#1b93dc"></div><div style="position:absolute;left:196px;top:193px;width:5px;height:5px;background:#1b93dc"></div><div style="position:absolute;left:198px;top:140px;width:1px;height:24px;background:#1a84c6"></div><div style="position:absolute;left:1600px;top:140px;width:12px;height:434px;background:#fbfbfb"></div><div style="position:absolute;left:1600px;top:140px;width:12px;height:5px;background:#b4b4b4"></div><div style="position:absolute;left:1603px;top:142px;width:6px;height:1px;background:#222"></div><div style="position:absolute;left:1603px;top:150px;width:6px;height:33px;background:#a9a9a9;border-radius:3px"></div><div style="position:absolute;left:1612px;top:101px;width:1px;height:473px;background:#b9b9b9"></div><div style="position:absolute;left:1612px;top:473px;width:7px;height:73px;background:#333"></div><svg style="position:absolute;left:1612px;top:473px" width="10" height="73"><path d="M2.5 33l4 3.5-4 3.5z" fill="#f0f0f0"/></svg><svg style="position:absolute;left:0;top:0" width="1622" height="140"><g transform="translate(10.5 33.5)"><rect x="0.5" y="0.5" width="17" height="17" rx="1.5" fill="#fbfbfb" stroke="#bcbcbc" stroke-width="1.2"/><path d="M0.5 7.5h17M0.5 12.7h17M5.6 7.5v10M12.5 7.5v10" stroke="#9e9e9e" stroke-width="1.1" fill="none"/></g><path d="M39.2 42h7.5l-3.75 4.2z" fill="#232629"/><g transform="translate(56.5 35)"><path d="M0.6 5v9.2a0.8 0.8 0 0 0 .8.8h14a.8.8 0 0 0 .8-.8V4" fill="none" stroke="#bcbcbc" stroke-width="1.2"/><path d="M0 0h6.5l2 2H16v3H5l-2 1.8H0z" fill="#232629"/></g><path d="M84.3 42h7.5l-3.75 4.2z" fill="#232629"/><g transform="translate(101.5 34.5)"><path d="M0.6 1.2a.6.6 0 0 1 .6-.6h12l2.2 2.2v12a.6.6 0 0 1-.6.6H1.2a.6.6 0 0 1-.6-.6z" fill="none" stroke="#bcbcbc" stroke-width="1.2"/><rect x="3.8" y="0.6" width="7.4" height="5" fill="none" stroke="#bcbcbc" stroke-width="1.1"/><rect x="9" y="0.6" width="2.4" height="5" fill="#232629"/><rect x="3.2" y="8.6" width="9.6" height="7" fill="none" stroke="#bcbcbc" stroke-width="1.1"/></g><path d="M129 42h7.5l-3.75 4.2z" fill="#232629"/><g transform="translate(157.5 34.5)"><path d="M8 0.6h5a.8.8 0 0 1 .8.8v10.8l-3.4 3.2H1.4a.8.8 0 0 1-.8-.8V11" fill="none" stroke="#bcbcbc" stroke-width="1.2"/><path d="M0 0h5.4v9L2.7 7.4 0 9z" fill="#232629"/><path d="M14 11.8v3.6h-3.6z" fill="#232629"/><path d="M1.5 7l3-5" stroke="#fff" stroke-width="1"/></g><g transform="translate(190.5 34.5)"><rect x="2.6" y="0" width="10.8" height="4.5" rx=".8" fill="#bcbcbc"/><path d="M3 12.5H1.4a.8.8 0 0 1-.8-.8V5.4a.8.8 0 0 1 .8-.8h13.2a.8.8 0 0 1 .8.8v6.3a.8.8 0 0 1-.8.8H13" fill="none" stroke="#bcbcbc" stroke-width="1.2"/><rect x="3.4" y="9.6" width="9.2" height="2.2" fill="#232629"/><path d="M4 11.5v3.6a.6.6 0 0 0 .6.6h6.8a.6.6 0 0 0 .6-.6v-3.6" fill="none" stroke="#bcbcbc" stroke-width="1.2"/><path d="M2.6 4.6h10.8" stroke="#232629" stroke-width="1"/></g><g transform="translate(225.5 34.5)"><path d="M9 0.6H1.4a.8.8 0 0 0-.8.8v13.4a.8.8 0 0 0 .8.8H7M13.6 5v4" fill="none" stroke="#bcbcbc" stroke-width="1.2"/><path d="M9.5 0h.6l4 4.2v.6H9.5z" fill="#232629"/><circle cx="9.4" cy="11.2" r="2.3" fill="none" stroke="#232629" stroke-width="1.1"/><path d="M11 12.8l2.6 2.6" stroke="#232629" stroke-width="1.1"/></g><g transform="translate(267.5 34.5)"><path d="M2.8 0.3l4.2 9.2M11.2 0.3L7 9.5M7 9.5L4 12.5M7 9.5l3 3" stroke="#232629" stroke-width="1" fill="none"/><rect x="0.6" y="12.3" width="3.2" height="3" rx=".8" fill="none" stroke="#232629" stroke-width="1"/><rect x="10.2" y="12.3" width="3.2" height="3" rx=".8" fill="none" stroke="#232629" stroke-width="1"/></g><g transform="translate(301.5 34.5)"><path d="M3.6 12.8H1.4a.8.8 0 0 1-.8-.8V1.4a.8.8 0 0 1 .8-.8h9.4a.8.8 0 0 1 .8.8V3" fill="none" stroke="#bcbcbc" stroke-width="1.2"/><path d="M13.4 12.5V4.6a.8.8 0 0 0-.8-.8H5.2a.8.8 0 0 0-.8.8v10.4a.8.8 0 0 0 .8.8h5" fill="none" stroke="#bcbcbc" stroke-width="1.2"/><path d="M14 11.4V16h-4.6z" fill="#232629"/></g><g transform="translate(333.5 34.5)"><path d="M3.2 2.2H1.4a.8.8 0 0 0-.8.8v12.2a.8.8 0 0 0 .8.8h11.4a.8.8 0 0 0 .8-.8V3a.8.8 0 0 0-.8-.8H11" fill="none" stroke="#bcbcbc" stroke-width="1.2"/><path d="M3.6 4.4V1.2Q3.6 0 4.8 0h4.6q1.2 0 1.2 1.2v3.2z" fill="#232629"/><path d="M3.4 6.5h7M3.4 9.3h4.5M3.4 12h1.5" stroke="#bcbcbc" stroke-width="1.2"/></g><path d="M360.2 42h7.5l-3.75 4.2z" fill="#232629"/><g transform="translate(388 34.5)"><path d="M7.6 0v7.8" stroke="#232629" stroke-width="1.2"/><rect x="3.2" y="7.8" width="9" height="1.3" fill="#232629"/><path d="M2.3 10.5h10l-.6 5H0z" fill="#232629"/></g><g transform="translate(423 34.2)"><path d="M4 0.6h9M0.2 15.9h8" stroke="#bcbcbc" stroke-width="1.2"/><path d="M10.3 0.6L3.8 15.9" stroke="#232629" stroke-width="1.3"/><path d="M9.5 11.8l5 4.6M14.5 11.8l-5 4.6" stroke="#e0303a" stroke-width="1.3"/></g><g transform="translate(463.5 34.5)"><path d="M1.2 3.8h6.2a4.6 4.6 0 0 1 0 9.4H5.5" fill="none" stroke="#bcbcbc" stroke-width="1.2"/><path d="M4 0.8L1 3.8l3 3" fill="none" stroke="#bcbcbc" stroke-width="1.2"/></g><path d="M489 42h7.5l-3.75 4.2z" fill="#a9a9a9"/><g transform="translate(507.5 34.5)"><path d="M11.8 3.8H5.6a4.6 4.6 0 0 0 0 9.4h1.9" fill="none" stroke="#bcbcbc" stroke-width="1.2"/><path d="M9 0.8l3 3-3 3" fill="none" stroke="#bcbcbc" stroke-width="1.2"/></g><path d="M534 42h7.5l-3.75 4.2z" fill="#a9a9a9"/><g transform="translate(561 34.5)"><circle cx="6" cy="5.6" r="5.2" fill="none" stroke="#232629" stroke-width="1.2"/><path d="M9.8 9.4l5.8 5.6" stroke="#232629" stroke-width="1.2"/><path d="M1.5 15h1M5.5 15h1M9.5 15h1" stroke="#f2765a" stroke-width="1.2"/></g><g transform="translate(597.5 34.5)"><path d="M0.8 13L6.5 0.6 12.2 13M2.8 9h7.4" fill="none" stroke="#232629" stroke-width="1.3"/><path d="M3.5 15.4h1.2M7 15.4h1.2M10.5 15.4h1.2" stroke="#18b04a" stroke-width="1.2"/></g><g transform="translate(635.5 34.5)"><rect x=".6" y=".6" width="14.8" height="14.8" rx="1" fill="#fafafa" stroke="#9e9e9e" stroke-width="1.2"/><rect x="1" y="5.2" width="14" height="5.6" fill="#c8e6fa"/><path d="M2 5.5l4.5 5M6 5.5l4.5 5M10 5.5l4.5 5" stroke="#3daee9" stroke-width="1"/><path d="M5.3 0v5M10.7 0v5M5.3 11v5M10.7 11v5M0 5.2h16M0 10.8h16M0 3h16M0 13h16" stroke="#707070" stroke-width="1" stroke-dasharray="1.4 .9"/></g><path d="M663.3 42h7.5l-3.75 4.2z" fill="#232629"/><g transform="translate(680.5 34.5)"><rect x=".6" y=".6" width="14.8" height="14.8" rx="1" fill="#fafafa" stroke="#9e9e9e" stroke-width="1.2"/><rect x="5.2" y="1" width="5.6" height="14" fill="#c8e6fa"/><path d="M5.5 6l5-4.5M5.5 10.5l5-4.5M5.5 15l5-4.5" stroke="#3daee9" stroke-width="1"/><path d="M0 5.3h5M0 10.7h5M11 5.3h5M11 10.7h5M5.2 0v16M10.8 0v16M3 0v16M13 0v16" stroke="#707070" stroke-width="1" stroke-dasharray="1.4 .9"/></g><path d="M708.3 42h7.5l-3.75 4.2z" fill="#232629"/><g transform="translate(737 34.5)"><path d="M3.5 0.3v9M0.6 6.5l2.9 3 2.9-3" fill="none" stroke="#232629" stroke-width="1.1"/><path d="M10 6v10M7.1 9l2.9-3 2.9 3" fill="none" stroke="#9e9e9e" stroke-width="1.1"/></g><g transform="translate(771 34.5)"><text x="0.5" y="5" font-size="6.5" font-family="Liberation Sans" fill="#3daee9">a</text><text x="0.5" y="11" font-size="6.5" font-family="Liberation Sans" fill="#232629">z</text><path d="M9 5.5v10M6.3 12.8l2.7 2.8 2.7-2.8" fill="none" stroke="#9e9e9e" stroke-width="1.1"/></g><g transform="translate(805 34.5)"><text x="0.5" y="5" font-size="6.5" font-family="Liberation Sans" fill="#232629">z</text><text x="0.5" y="11" font-size="6.5" font-family="Liberation Sans" fill="#3daee9">a</text><path d="M9 5.5v10M6.3 12.8l2.7 2.8 2.7-2.8" fill="none" stroke="#9e9e9e" stroke-width="1.1"/></g><g transform="translate(838 34.5)"><path d="M1.2 .8h13.6L9.2 7.2v5.6L6.8 15.2V7.2z" fill="none" stroke="#5a5a5a" stroke-width="1" stroke-dasharray="1.6 .9"/><path d="M0 7.8h1.2M14.8 7.8h1.4" stroke="#9e9e9e" stroke-width="1"/></g><g transform="translate(880 34.5)"><path d="M.6 15.4V.6h14.8v10" fill="none" stroke="#bcbcbc" stroke-width="1.2"/><path d="M.6 15.4h6" stroke="#bcbcbc" stroke-width="1.2"/><rect x="3" y="3" width="2.6" height="2.6" fill="#232629"/><path d="M1 15.5L6.5 10l-1.5-1.5h6.5v6.5L10 13.5 8 15.5z" fill="#232629"/><path d="M13.5 12v3.5M11.8 13.8h3.5" stroke="#3daee9" stroke-width="1"/></g><g transform="translate(914 34.5)"><path d="M.6 1v14.6h15" fill="none" stroke="#bcbcbc" stroke-width="1.1"/><rect x="4" y="0.5" width="2.6" height="14.5" fill="#232629"/><rect x="8.8" y="5.5" width="2.6" height="9.5" fill="#232629"/><path d="M14 0v3.5M12.2 1.8h3.6" stroke="#3daee9" stroke-width="1"/></g><g transform="translate(948 34.5)"><rect x=".6" y=".6" width="2.6" height="2.6" fill="none" stroke="#232629" stroke-width=".9"/><rect x="5.8" y=".3" width="3" height="3" fill="#232629"/><rect x="11.6" y=".6" width="2.6" height="2.6" fill="none" stroke="#232629" stroke-width=".9"/><rect x=".6" y="6.3" width="2.6" height="2.6" fill="none" stroke="#232629" stroke-width=".9"/><rect x=".3" y="12" width="3" height="3" fill="#232629"/><path d="M12.5 6v4.5a2.5 2.5 0 0 1-2.5 2.5H7" fill="none" stroke="#3daee9" stroke-width="1.1"/></g><g transform="translate(986 34.5)"><text x="0" y="15.6" font-size="20" font-family="Liberation Sans" fill="#232629">&#937;</text><path d="M17 13.5v3M15.5 15h3" stroke="#3daee9" stroke-width="1"/></g><path d="M1015 42h7.5l-3.75 4.2z" fill="#232629"/><g transform="translate(1035 34.5)"><path d="M0 4.5h2M13 4.5h2" stroke="#9e9e9e" stroke-width="1"/><path d="M5 1.5L2.5 4.5 5 7.5M10 1.5l2.5 3-2.5 3M7.5 3v3" fill="none" stroke="#9e9e9e" stroke-width="1.1"/><path d="M12.8 11v3.5M11 12.8h3.5" stroke="#3daee9" stroke-width="1"/></g><g transform="translate(1068 34.5)"><path d="M2.5 9.8H1.4a.8.8 0 0 1-.8-.8V1.4a.8.8 0 0 1 .8-.8h13.2a.8.8 0 0 1 .8.8v7.6a.8.8 0 0 1-.8.8H5" fill="none" stroke="#f49a82" stroke-width="1.1"/><path d="M.8 9.6h2.8l-1.6 3z" fill="#f49a82"/><path d="M12.2 12.2v3.2M10.6 13.8h3.2" stroke="#f49a82" stroke-width="1.1"/></g><g transform="translate(1104 34.5)"><rect x=".6" y=".6" width="12.8" height="14.8" rx="1" fill="none" stroke="#a8a8a8" stroke-width="1.2"/><rect x="2" y="1.8" width="10" height="1.9" fill="#c5e2f6"/><rect x="2" y="12.3" width="10" height="1.9" fill="#c5e2f6"/></g><g transform="translate(1145 34.5)"><path d="M9 .6H1.4a.8.8 0 0 0-.8.8v13.4a.8.8 0 0 0 .8.8H4.5" fill="none" stroke="#9e9e9e" stroke-width="1.2"/><path d="M9.4 0h.6l4 4.2V5H9.4z" fill="#232629"/><path d="M11.2 8.2a1.8 1.8 0 0 1 1.8 1.8v.8q2.2 1.3 2.2 3a2.6 2.6 0 0 1-2.6 2.4h-2.8A2.6 2.6 0 0 1 7.2 13.8q0-1.7 2.2-3V10a1.8 1.8 0 0 1 1.8-1.8z" fill="none" stroke="#232629" stroke-width="1.1"/></g><g transform="translate(1177 34.5)"><path d="M0 0h15v3.6H3.6V15H0z" fill="#3daee9"/><rect x="3.6" y="3.6" width="11.8" height="11.8" rx=".8" fill="#fafafa" stroke="#9a9a9a" stroke-width=".8"/><path d="M7.5 4v12M11.5 4v12M4 7.6h12M4 11.6h12" stroke="#666" stroke-width="1" stroke-dasharray="1.4 .8"/></g><path d="M1204 42h7.5l-3.75 4.2z" fill="#232629"/><g transform="translate(1224 34.5)"><rect x="0" y="0" width="16" height="3.5" fill="#232629"/><path d="M.6 3.5v3.3a.8.8 0 0 0 .8.8h13.2a.8.8 0 0 0 .8-.8V3.5M.6 10.6a.8.8 0 0 1 .8-.8h13.2a.8.8 0 0 1 .8.8v4a.8.8 0 0 1-.8.8H1.4a.8.8 0 0 1-.8-.8zM5 3.5v4M5 9.8v5.6" fill="none" stroke="#9e9e9e" stroke-width="1.1"/></g><g transform="translate(1266 34.5)"><path d="M14 0.3q1.2 0.3 1 1.2L8 8.8 6.8 7.6z" fill="#232629"/><path d="M6.4 8q-1.5-.5-2.8.6Q2 10 1.5 12.5L0 15.5q3.5 0 5.2-1.7Q7 12 7.4 9.3z" fill="#232629"/><path d="M12.5 11.5v3.5M10.8 13.2h3.5" stroke="#3daee9" stroke-width="1"/></g><text x="428" y="89" font-size="21.5" font-weight="bold" font-family="Liberation Sans" fill="#232629">G</text><path d="M467.8 73.9h9.2M463.8 89.1h9.2" stroke="#bcbcbc" stroke-width="1.4"/><path d="M474.6 74L467 89" stroke="#232629" stroke-width="1.3"/><text x="496" y="89.3" font-size="22" font-weight="bold" font-family="Liberation Serif" fill="#232629">S</text><rect x="495.8" y="92.3" width="13.2" height="1.6" fill="#bcbcbc"/><path d="M522 80.8h7.5l-3.75 4.2z" fill="#232629"/><path d="M548 74.4h11M553.3 74.4v11.5" stroke="#232629" stroke-width="1.1"/><path d="M561 79.8q-2.3 3-2.3 4.3a2.3 2.3 0 0 0 4.6 0q0-1.3-2.3-4.3z" fill="#232629"/><rect x="543" y="88" width="25" height="6" fill="#c9211e"/><path d="M575 80.8h7.5l-3.75 4.2z" fill="#232629"/><rect x="593" y="73.9" width="15" height="12.9" fill="#232629"/><path d="M605 78.8q-2.8 3.5-2.8 5a2.8 2.8 0 0 0 5.6 0q0-1.5-2.8-5z" fill="#fff"/><rect x="588" y="88" width="25" height="6" fill="#ffff00"/><path d="M620 80.8h7.5l-3.75 4.2z" fill="#232629"/><rect x="648" y="73.2" width="15" height="1.6" fill="#c3c3c3"/><rect x="648" y="75.10000000000001" width="8" height="1.5" fill="#c3c3c3"/><rect x="648" y="79.2" width="9" height="1.5" fill="#c3c3c3"/><rect x="648" y="81.0" width="3" height="1.7" fill="#c3c3c3"/><rect x="648" y="85.3" width="9" height="1.5" fill="#c3c3c3"/><rect x="648" y="87.10000000000001" width="6" height="1.7" fill="#c3c3c3"/><rect x="682" y="73.2" width="15" height="1.6" fill="#c3c3c3"/><rect x="684" y="75.10000000000001" width="11" height="1.5" fill="#c3c3c3"/><rect x="682" y="79.2" width="15" height="1.5" fill="#c3c3c3"/><rect x="686" y="81.0" width="7" height="1.7" fill="#c3c3c3"/><rect x="682" y="84.4" width="15" height="1.5" fill="#c3c3c3"/><rect x="684" y="86.2" width="11" height="1.7" fill="#c3c3c3"/><rect x="716" y="73.2" width="15" height="1.6" fill="#c3c3c3"/><rect x="723" y="75.10000000000001" width="8" height="1.5" fill="#c3c3c3"/><rect x="722" y="79.2" width="9" height="1.5" fill="#c3c3c3"/><rect x="728" y="81.0" width="3" height="1.7" fill="#c3c3c3"/><rect x="722" y="85.3" width="9" height="1.5" fill="#c3c3c3"/><rect x="725" y="87.10000000000001" width="6" height="1.7" fill="#c3c3c3"/><rect x="758" y="73.2" width="15" height="1.5" fill="#c3c3c3"/><path d="M765.5 89V78" stroke="#232629" stroke-width="1.4"/><path d="M762.3 80l3.2-4 3.2 4z" fill="#232629"/><rect x="792" y="79.6" width="15" height="1.5" fill="#c3c3c3"/><rect x="792" y="82.6" width="15" height="1.5" fill="#c3c3c3"/><path d="M799.5 73v4.5M799.5 86v4" stroke="#232629" stroke-width="1.3"/><path d="M797 76.5h5l-2.5 2.8zM797 87.2h5l-2.5-2.8z" fill="#232629"/><rect x="826" y="88.3" width="15" height="1.5" fill="#c3c3c3"/><path d="M833.5 73.5V84" stroke="#232629" stroke-width="1.4"/><path d="M830.3 82.2l3.2 4 3.2-4z" fill="#232629"/><rect x="868" y="73.2" width="15" height="1.7" fill="#c3c3c3"/><rect x="868" y="74.9" width="8" height="1.7" fill="#c3c3c3"/><rect x="868" y="79.2" width="9" height="1.7" fill="#c3c3c3"/><rect x="868" y="80.9" width="3" height="1.7" fill="#c3c3c3"/><rect x="868" y="85.3" width="9" height="1.6" fill="#c3c3c3"/><rect x="868" y="86.9" width="7" height="1.6" fill="#c3c3c3"/><path d="M876 82.8h3a3 3 0 0 1 0 5.5" fill="none" stroke="#3daee9" stroke-width="1.2"/><path d="M880.5 86.5l-2.5 2.8 3 .5z" fill="#3daee9"/><g transform="translate(909.6 73.2)"><rect x=".6" y=".6" width="14.8" height="14.8" rx="1.5" fill="none" stroke="#bdbdbd" stroke-width="1.1"/><path d="M0 4.2h16M0 8h16M0 11.8h16M4 0v16M8 0v16M12 0v16" stroke="#b4b4b4" stroke-width="1" stroke-dasharray="1.6 .8"/><rect x="2" y="5" width="12" height="6" fill="#f5f5f5"/><path d="M6.5 6.2L5 8l1.5 1.8M9.5 6.2L11 8 9.5 9.8" fill="none" stroke="#a0a0a0" stroke-width="1"/></g><g transform="translate(943.7 73.2)"><rect x=".6" y=".6" width="14.8" height="14.8" rx="1.5" fill="none" stroke="#bdbdbd" stroke-width="1.1"/><path d="M0 4.2h16M0 8h16M0 11.8h16M4 0v16M8 0v16M12 0v16" stroke="#b4b4b4" stroke-width="1" stroke-dasharray="1.6 .8"/><rect x="5" y="3" width="7" height="10" fill="#f5f5f5"/></g><g transform="translate(977.8 73.2)"><rect x=".6" y=".6" width="14.8" height="14.8" rx="1.5" fill="none" stroke="#bdbdbd" stroke-width="1.1"/><path d="M0 4.2h16M0 8h16M0 11.8h16M4 0v16M8 0v16M12 0v16" stroke="#b4b4b4" stroke-width="1" stroke-dasharray="1.6 .8"/><rect x="3" y="5" width="10" height="6" fill="#f5f5f5"/><path d="M4.5 6.2L6 8 4.5 9.8M11.5 6.2L10 8l1.5 1.8" fill="none" stroke="#a0a0a0" stroke-width="1"/></g><rect x="1016.9" y="75.6" width="17" height="11.6" rx="1.6" fill="none" stroke="#bcbcbc" stroke-width="1.2"/><circle cx="1025.5" cy="81.5" r="2.1" fill="none" stroke="#232629" stroke-width="1.1"/><path d="M1045 80.8h7.5l-3.75 4.2z" fill="#232629"/><path d="M1066.2 89.5L1078.5 73.2" stroke="#232629" stroke-width="1.1"/><circle cx="1068.3" cy="77.2" r="2.3" fill="none" stroke="#232629" stroke-width="1.1"/><circle cx="1077" cy="85.6" r="2.3" fill="none" stroke="#232629" stroke-width="1.1"/><ellipse cx="1100.8" cy="81.3" rx="3.2" ry="6.4" fill="none" stroke="#9a9a9a" stroke-width="1.1"/><ellipse cx="1111.3" cy="81.3" rx="3.2" ry="6.4" fill="none" stroke="#9a9a9a" stroke-width="1.1"/><rect x="1105" y="87.5" width="1.2" height="3" fill="#bcbcbc"/><path d="M1133.2 76v12.4a.7.7 0 0 0 .7.7h13.8a.7.7 0 0 0 .7-.7V76" fill="none" stroke="#9e9e9e" stroke-width="1.2"/><rect x="1136.9" y="74.1" width="7.4" height="2.4" fill="#232629"/><rect x="1132.7" y="73.5" width="1.4" height="3.6" fill="#232629"/><rect x="1147.4" y="73.5" width="1.4" height="3.6" fill="#232629"/><circle cx="1136.5" cy="79.6" r=".75" fill="#232629"/><circle cx="1136.5" cy="82.6" r=".75" fill="#232629"/><circle cx="1140.5" cy="79.6" r=".75" fill="#232629"/><circle cx="1140.5" cy="82.6" r=".75" fill="#232629"/><circle cx="1144.5" cy="79.6" r=".75" fill="#232629"/><circle cx="1144.5" cy="82.6" r=".75" fill="#232629"/><circle cx="1144.5" cy="85.6" r=".75" fill="#232629"/><rect x="1174" y="84.3" width="1.3" height="2.6" fill="#bcbcbc"/><ellipse cx="1178.5" cy="78.9" rx="3" ry="5" fill="none" stroke="#8a8a8a" stroke-width="1.1"/><ellipse cx="1187" cy="78.9" rx="3" ry="5" fill="none" stroke="#8a8a8a" stroke-width="1.1"/><path d="M1187 86.4v3.2M1185.4 88h3.2" stroke="#3daee9" stroke-width="1.1"/><rect x="1208" y="84.3" width="1.3" height="2.6" fill="#bcbcbc"/><ellipse cx="1213.5" cy="78.9" rx="3" ry="5" fill="none" stroke="#8a8a8a" stroke-width="1.1"/><ellipse cx="1222" cy="78.9" rx="3" ry="5" fill="none" stroke="#d3d3d3" stroke-width="1.1"/><path d="M1220.5 86.3l3 3M1223.5 86.3l-3 3" stroke="#e0303a" stroke-width="1"/><rect x="1251" y="73.1" width="15" height="1.7" fill="#c3c3c3"/><rect x="1251" y="74.8" width="12" height="2" fill="#c3c3c3"/><rect x="1257" y="79.1" width="9" height="1.7" fill="#c3c3c3"/><rect x="1257" y="80.8" width="1.4" height="1.5" fill="#c3c3c3"/><rect x="1263" y="80.8" width="3" height="1.5" fill="#c3c3c3"/><rect x="1257" y="85.19999999999999" width="9" height="1.4" fill="#c3c3c3"/><rect x="1251" y="86.89999999999999" width="12" height="1.7" fill="#c3c3c3"/><path d="M1250.6 79.2v4.8l3.6-2.4z" fill="#3daee9"/><rect x="1285" y="73.1" width="15" height="1.7" fill="#c3c3c3"/><rect x="1288" y="74.8" width="12" height="2" fill="#c3c3c3"/><rect x="1285" y="79.1" width="9" height="1.7" fill="#c3c3c3"/><rect x="1292.6" y="80.8" width="1.4" height="1.5" fill="#c3c3c3"/><rect x="1285" y="80.8" width="3" height="1.5" fill="#c3c3c3"/><rect x="1285" y="85.19999999999999" width="9" height="1.4" fill="#c3c3c3"/><rect x="1288" y="86.89999999999999" width="12" height="1.7" fill="#c3c3c3"/><path d="M1300.4 79.2v4.8l-3.6-2.4z" fill="#3daee9"/><rect x="1325.2" y="74.3" width="14.4" height="14.4" fill="#fff" stroke="#f6a38c" stroke-width="1"/><rect x="1326.2" y="75.3" width="12.4" height="12.4" fill="none" stroke="#6f6f6f" stroke-width="1"/><path d="M1352 80.8h7.5l-3.75 4.2z" fill="#232629"/><rect x="1369" y="73.3" width="16" height="1.3" fill="#232629"/><rect x="1369" y="76.8" width="16" height="1.4" fill="#c3c3c3"/><rect x="1369.2" y="80.5" width="1.4" height="1.3" fill="#232629"/><rect x="1372.4" y="80.5" width="1.4" height="1.3" fill="#232629"/><rect x="1375.6000000000001" y="80.5" width="1.4" height="1.3" fill="#232629"/><rect x="1378.8" y="80.5" width="1.4" height="1.3" fill="#232629"/><rect x="1382.0" y="80.5" width="1.4" height="1.3" fill="#232629"/><rect x="1369" y="84" width="16" height="1.4" fill="#c3c3c3"/><rect x="1369.2" y="88" width="1.2" height="1.2" fill="#d8d8d8"/><rect x="1372.4" y="88" width="1.2" height="1.2" fill="#d8d8d8"/><rect x="1375.6000000000001" y="88" width="1.2" height="1.2" fill="#d8d8d8"/><rect x="1378.8" y="88" width="1.2" height="1.2" fill="#d8d8d8"/><rect x="1382.0" y="88" width="1.2" height="1.2" fill="#d8d8d8"/><path d="M1397 80.8h7.5l-3.75 4.2z" fill="#232629"/><rect x="1415.6" y="74.3" width="14.2" height="13" fill="#fff" stroke="#b04f35" stroke-width="1.2"/><path d="M1425.3 79.6q-2 2.6-2 3.8a2 2 0 0 0 4 0q0-1.2-2-3.8z" fill="#232629"/><rect x="1410" y="88" width="25" height="6" fill="#2a5f9e"/><path d="M1442 80.8h7.5l-3.75 4.2z" fill="#232629"/><path d="M1471.8 74.3q-4.2 5.4-4.2 7.9a4.2 4.2 0 0 0 8.4 0q0-2.5-4.2-7.9z" fill="#232629"/><path d="M1476 82.2a4.2 4.2 0 0 1-5.9 3.8" fill="none" stroke="#fff" stroke-width=".8"/><path d="M1478.5 87.5l3.5-4M1479 84.8v3" stroke="#3daee9" stroke-width="1.1"/><path d="M1495 80.8h7.5l-3.75 4.2z" fill="#232629"/><rect x="1513.5" y="64.5" width="33" height="35" rx="3" fill="#d1d1d1" stroke="#b6b6b6" stroke-width="1"/><path d="M1523.3 80.2l3.6-6.8 3.6 6.8" fill="none" stroke="#232629" stroke-width="1"/><rect x="1523" y="82.0" width="11" height="1.3" fill="#a5a5a5"/><rect x="1523" y="84.45" width="11" height="1.3" fill="#a5a5a5"/><rect x="1523" y="86.9" width="11" height="1.3" fill="#a5a5a5"/><rect x="1523" y="89.35" width="11" height="1.3" fill="#a5a5a5"/><rect x="1531.5" y="73.3" width="3.5" height="1" fill="#b5b5b5"/><rect x="1531.5" y="75.2" width="3.5" height="1" fill="#b5b5b5"/><rect x="1531.5" y="77.1" width="3.5" height="1" fill="#b5b5b5"/><rect x="1531.5" y="79.0" width="3.5" height="1" fill="#b5b5b5"/><path d="M1536.6 74.6l1.6 .9-1.6 .9zM1536.6 80.8l1.6 .9-1.6 .9zM1536.6 86.9l1.6 .9-1.6 .9z" fill="#232629"/><path d="M1556.8 80l3.4-6 3.4 6" fill="none" stroke="#232629" stroke-width="1"/><path d="M1557.3 82v5.5M1560.2 82v5.5M1563.1 82v5.5M1566 82v5.5" stroke="#b0b0b0" stroke-width="1.3" stroke-dasharray="1.5 .6"/><path d="M1569 73.7v14.6M1572.4 73.7v14.6" stroke="#c0c0c0" stroke-width="1.4"/><path d="M1557.3 88.6h.1M1560.2 88.6h.1M1563.1 88.6h.1" stroke="#232629" stroke-width="1.2" stroke-linecap="round"/><text x="238.6" y="126" font-size="16" font-family="Liberation Sans" fill="#aaaaaa">f</text><text x="243.8" y="126.3" font-size="8.5" font-family="Liberation Sans" fill="#232629">x</text><path d="M273.5 113.6H262.3l5.3 6.5-5.3 6.6h11.2" fill="none" stroke="#a9a9a9" stroke-width="1.1"/><path d="M283.2 118.2h7l-3.5 3.9z" fill="#232629"/><rect x="303" y="117.5" width="7.4" height="1.3" fill="#c0c0c0"/><rect x="303" y="121" width="7.4" height="1.3" fill="#c0c0c0"/><path d="M259.3 78.2h12l-6 6.5z" fill="#232629"/><path d="M388.3 78.2h12l-6 6.5z" fill="#232629"/><path d="M199.3 117.2h12l-6 6.5z" fill="#232629"/><path d="M1593 116.3h12l-6 6.8z" fill="#232629"/></svg>
</body></html>
